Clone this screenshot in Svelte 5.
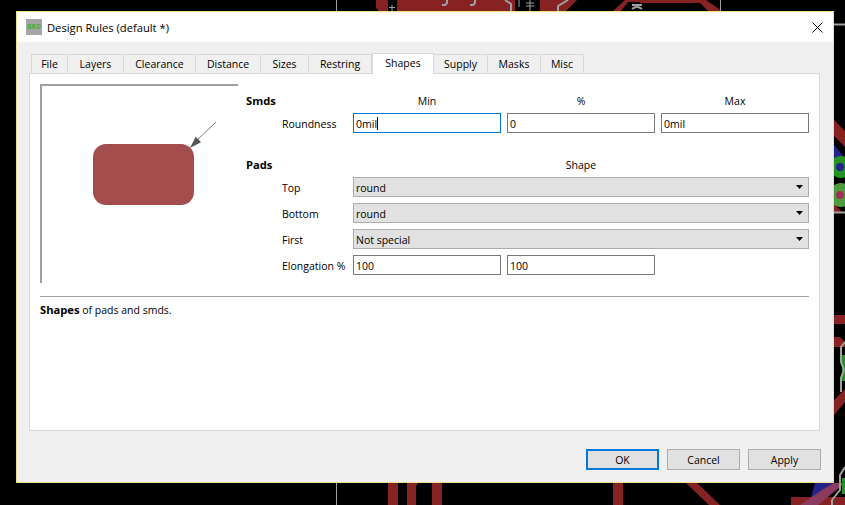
<script>
	// Вкладки диалога с шириной из данных
	const tabs = [
		{ label: 'File', width: 37 },
		{ label: 'Layers', width: 56 },
		{ label: 'Clearance', width: 72 },
		{ label: 'Distance', width: 65 },
		{ label: 'Sizes', width: 48 },
		{ label: 'Restring', width: 63 },
		{ label: 'Shapes', width: 62, active: true },
		{ label: 'Supply', width: 54 },
		{ label: 'Masks', width: 53 },
		{ label: 'Misc', width: 43 }
	];

	const padRows = [
		{ label: 'Top', value: 'round' },
		{ label: 'Bottom', value: 'round' },
		{ label: 'First', value: 'Not special' }
	];
</script>

<div class="desktop">
	<!-- Плата за окном -->
	<svg class="board" width="845" height="505" viewBox="0 0 845 505">
		<g fill="#872222">
			<path d="M376 0H388V11H379L376 8Z" />
			<path d="M397 0H515V11H397Z" />
			<path d="M540 0H577L566 11H540Z" />
			<path d="M613 11L625 0H640V2H628L621 11Z" />
			<path d="M640 0H706L722 11H708L700 3H640Z" />
			<rect x="388" y="483" width="10" height="22" />
			<path d="M407 483H418L416 486V505H407Z" />
			<rect x="432" y="483" width="10" height="22" />
			<rect x="613" y="483" width="10" height="22" />
			<path d="M686 483H697L720 505H709Z" />
			<path d="M791 497H845V505H791Z" />
			<path d="M834 120L845 131V147L834 136Z" />
			<rect x="834" y="315" width="11" height="9" />
			<path d="M834 337H840L845 342V347L841 347L834 347Z" />
			<path d="M834 400L845 389V402L834 415Z" />
			<path d="M834 204L842 212H834Z" />
		</g>
		<path d="M834 145L845 158V165H834Z" fill="#23238c" />
		<path d="M815 483H835L822 497H811Z" fill="#23238c" />
		<path d="M834 483H845L818 505H800L822 490Z" fill="#8c3a5e" />
		<g>
			<circle cx="841" cy="167" r="11" fill="#249324" />
			<circle cx="841" cy="195" r="12" fill="#4f9a3f" />
			<rect x="842" y="355" width="6" height="26" fill="#249324" />
			<rect x="842" y="478" width="6" height="16" fill="#249324" />
		</g>
		<circle cx="840" cy="167" r="4" fill="#23238c" />
		<circle cx="840" cy="195" r="4" fill="#a0305c" />
		<g fill="none" stroke="#a0a0a0">
			<path d="M336.5 0V11M336.5 483V505M720.5 0V11" />
			<path d="M834 24.5H845" stroke-width="2" />
			<path d="M834 212.5H845" stroke-width="2" />
			<path d="M845 342L841 347V362L844 370L841 378V392" stroke-width="2" />
			<path d="M845 467L840 475V490L832 500V505" stroke-width="2" />
			<path d="M392 5V11M389 7.5H395" />
			<path d="M447 0V3L445 5H442M475 0V3L473 5H470M505 0L511 4V11" stroke-width="2" />
			<path d="M519 0V7M526 3H534M526 6H534M530 0V11" />
			<path d="M568 0L558 6V11M632 5H642M632 9Q637 5 642 9" stroke-width="2" />
		</g>
	</svg>

	<!-- Окно диалога -->
	<div class="dialog">
		<header class="titlebar">
			<span class="app-icon">BRD</span>
			<span class="title">Design Rules (default *)</span>
			<svg class="close" width="11" height="11" viewBox="0 0 11 11">
				<path d="M0.5 0.5L10.5 10.5M10.5 0.5L0.5 10.5" stroke="#000" fill="none" />
			</svg>
		</header>

		<div class="body">
			<div class="tabs">
				{#each tabs as tab}
					<div class="tab" class:active={tab.active} style="width: {tab.width}px">{tab.label}</div>
				{/each}
			</div>

			<div class="panel">
				<div class="top">
					<div class="preview">
						<svg width="196" height="197" viewBox="0 0 196 197">
							<rect x="51" y="58" width="101" height="61" rx="13" fill="#a34d4d" />
							<path d="M174 36L152 57" stroke="#555" stroke-width="0.8" fill="none" />
							<path d="M148 62L153.7 50.7L159 56.3Z" fill="#555" />
						</svg>
					</div>

					<div class="form">
						<div class="section">
							<b class="section-title">Smds</b>
							<div class="cells">
								<span class="head">Min</span>
								<span class="head">%</span>
								<span class="head">Max</span>
							</div>
						</div>
						<div class="row">
							<span class="label">Roundness</span>
							<div class="cells">
								<div class="input focus">0mil<i class="caret"></i></div>
								<div class="input">0</div>
								<div class="input">0mil</div>
							</div>
						</div>

						<div class="section pads">
							<b class="section-title">Pads</b>
							<div class="cells">
								<span class="head wide">Shape</span>
							</div>
						</div>
						{#each padRows as row}
							<div class="row">
								<span class="label">{row.label}</span>
								<div class="select">
									<span class="value">{row.value}</span>
									<svg width="7" height="4" viewBox="0 0 7 4"><path d="M0 0H7L3.5 4Z" fill="#000" /></svg>
								</div>
							</div>
						{/each}
						<div class="row">
							<span class="label">Elongation %</span>
							<div class="cells">
								<div class="input">100</div>
								<div class="input">100</div>
							</div>
						</div>
					</div>
				</div>

				<div class="description"><b>Shapes</b> of pads and smds.</div>
			</div>

			<div class="buttons">
				<div class="button default">OK</div>
				<div class="button">Cancel</div>
				<div class="button">Apply</div>
			</div>
		</div>
	</div>
</div>

<style>
	:global(body) {
		margin: 0;
		background: #000;
	}

	.desktop {
		position: relative;
		width: 845px;
		height: 505px;
		overflow: hidden;
		background: #000;
		font-family: 'Open Sans', 'Liberation Sans', sans-serif;
		font-size: 10.5px;
		color: #000;
	}

	.board {
		position: absolute;
		left: 0;
		top: 0;
	}

	.dialog {
		position: absolute;
		left: 16px;
		top: 11px;
		width: 816px;
		height: 470px;
		border: 1px solid #ecdf8e;
		display: flex;
		flex-direction: column;
		background: #f0f0f0;
	}

	.titlebar {
		height: 30px;
		flex: none;
		background: #fff;
		display: flex;
		align-items: center;
		padding: 0 10px 0 9px;
		gap: 5px;
	}

	.app-icon {
		width: 16px;
		height: 16px;
		background: #a6a6a6;
		color: #3fae3f;
		font-size: 6.5px;
		font-weight: 700;
		line-height: 16px;
		text-align: center;
		overflow: hidden;
	}

	.title {
		font-size: 11.2px;
		flex: 1;
	}

	.body {
		flex: 1;
		padding: 13px 13px 0 12px;
		display: flex;
		flex-direction: column;
	}

	.tabs {
		display: flex;
		height: 18px;
		padding-left: 2px;
		align-items: flex-end;
	}

	.tab {
		box-sizing: border-box;
		height: 19px;
		line-height: 19px;
		text-align: center;
		background: #f0f0f0;
		border: 1px solid #d9d9d9;
		border-bottom: none;
		border-left-width: 0;
		margin-bottom: 0;
	}

	.tab:first-child {
		border-left-width: 1px;
	}

	.tab.active {
		position: relative;
		height: 21px;
		line-height: 18px;
		background: #fff;
		border-left-width: 1px;
		margin-bottom: -1px;
	}

	.panel {
		box-sizing: border-box;
		height: 358px;
		background: #fff;
		border: 1px solid #d9d9d9;
		padding: 10px 10px 0;
	}

	.top {
		display: flex;
		gap: 8px;
		height: 212px;
		border-bottom: 1px solid #a0a0a0;
	}

	.preview {
		box-sizing: border-box;
		width: 198px;
		height: 199px;
		border-top: 2px solid #a0a0a0;
		border-left: 2px solid #a0a0a0;
	}

	.preview svg {
		display: block;
	}

	.form {
		padding-top: 10px;
		display: flex;
		flex-direction: column;
		gap: 6px;
	}

	.section {
		display: flex;
		height: 14px;
		line-height: 14px;
		margin-bottom: -1px;
	}

	.section.pads {
		margin-top: 19px;
	}

	.section-title {
		width: 107px;
		font-size: 11.2px;
		font-weight: 700;
	}

	.row {
		display: flex;
		align-items: center;
		height: 20px;
		padding-left: 36px;
	}

	.label {
		width: 71px;
		padding-top: 2px;
		white-space: nowrap;
	}

	.cells {
		display: flex;
		gap: 6px;
	}

	.head {
		width: 148px;
		text-align: center;
	}

	.head.wide {
		width: 456px;
	}

	.input {
		box-sizing: border-box;
		width: 148px;
		height: 20px;
		line-height: 20px;
		padding-left: 2px;
		background: #fff;
		border: 1px solid #7a7a7a;
	}

	.input.focus {
		border-color: #0078d7;
	}

	.caret {
		display: inline-block;
		width: 1px;
		height: 13px;
		background: #000;
		vertical-align: -2px;
	}

	.select {
		box-sizing: border-box;
		width: 456px;
		height: 20px;
		padding: 0 5px 0 2px;
		display: flex;
		align-items: center;
		justify-content: space-between;
		background: #e1e1e1;
		border: 1px solid #adadad;
	}

	.value {
		padding-top: 2px;
	}

	.description {
		margin-top: 5px;
		line-height: 15px;
	}

	.description b {
		font-size: 11.2px;
	}

	.buttons {
		display: flex;
		justify-content: flex-end;
		gap: 8px;
		margin: 18px -1px 0 0;
	}

	.button {
		box-sizing: border-box;
		width: 73px;
		height: 21px;
		line-height: 21px;
		text-align: center;
		background: #e1e1e1;
		border: 1px solid #adadad;
	}

	.button.default {
		border: 2px solid #0078d7;
		line-height: 19px;
	}
</style>
